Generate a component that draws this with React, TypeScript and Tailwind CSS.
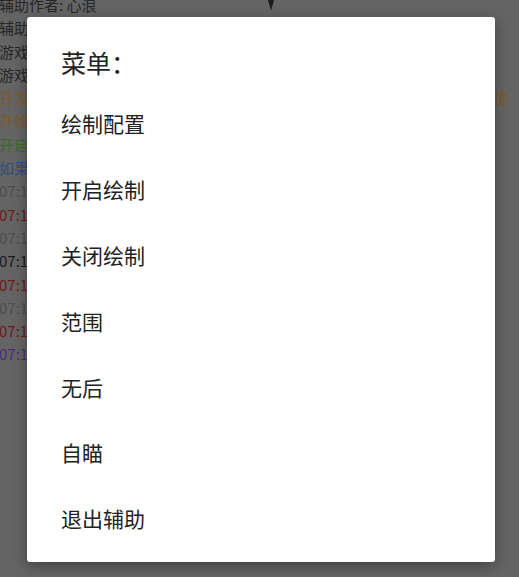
import React from "react";

const logs: { text: string; color: string }[] = [
  { text: "辅助作者: 心浪", color: "text-[#262626]" },
  { text: "辅助版本: 2.1.0", color: "text-[#262626]" },
  { text: "游戏版本: 1.0.0", color: "text-[#262626]" },
  { text: "游戏包名: com.game", color: "text-[#262626]" },
  { text: "开发者提示：本辅助仅供学习交流使用，请勿用于商业用途，有问题请及时提", color: "text-[#7a5a2e]" },
  { text: "开帧率提示：请在游戏内开启高帧率模式", color: "text-[#7a5a2e]" },
  { text: "开启无障碍服务成功", color: "text-[#3d6b2e]" },
  { text: "如果绘制异常请重启辅助", color: "text-[#2e4f80]" },
  { text: "07:18:21 初始化完成", color: "text-[#4d4d4d]" },
  { text: "07:18:22 获取权限失败", color: "text-[#6e1a1a]" },
  { text: "07:18:23 正在加载", color: "text-[#4d4d4d]" },
  { text: "07:18:24 加载完成", color: "text-[#1a1a1a]" },
  { text: "07:18:25 连接失败", color: "text-[#6e1a1a]" },
  { text: "07:18:26 重新连接", color: "text-[#4d4d4d]" },
  { text: "07:18:27 连接超时", color: "text-[#6e1a1a]" },
  { text: "07:18:28 启动成功", color: "text-[#4a2d80]" },
];

const items = ["绘制配置", "开启绘制", "关闭绘制", "范围", "无后", "自瞄", "退出辅助"];

export default function App() {
  return (
    <div
      className="relative w-[519px] h-[577px] overflow-hidden bg-[#646464]"
      style={{ fontFamily: '"Noto Sans CJK SC", "Noto Sans", sans-serif' }}
    >
      <div className="flex flex-col mt-[-7px] ml-[-1px] text-[15px] leading-[23.3px] whitespace-nowrap">
        {logs.map((l, i) => (
          <div key={i} className={l.color}>
            {l.text}
          </div>
        ))}
      </div>

      <svg className="absolute left-[267px] top-0" width="8" height="11" viewBox="0 0 8 11">
        <path d="M1 0 L7 0 L4.2 10 L3.8 10 Z" fill="#1c1c1c" />
      </svg>

      <div className="absolute left-[27px] top-[17px] w-[468px] h-[545px] bg-white rounded-[3px] shadow-[0_4px_14px_rgba(0,0,0,0.35)] flex flex-col px-[34px] pb-[10px]">
        <div className="h-[74px] pt-[30px] text-[25px] leading-[30px] text-[#222]">菜单：</div>
        {items.map((it) => (
          <div key={it} className="h-[66px] flex items-center text-[21px] text-[#222]">
            {it}
          </div>
        ))}
      </div>
    </div>
  );
}
